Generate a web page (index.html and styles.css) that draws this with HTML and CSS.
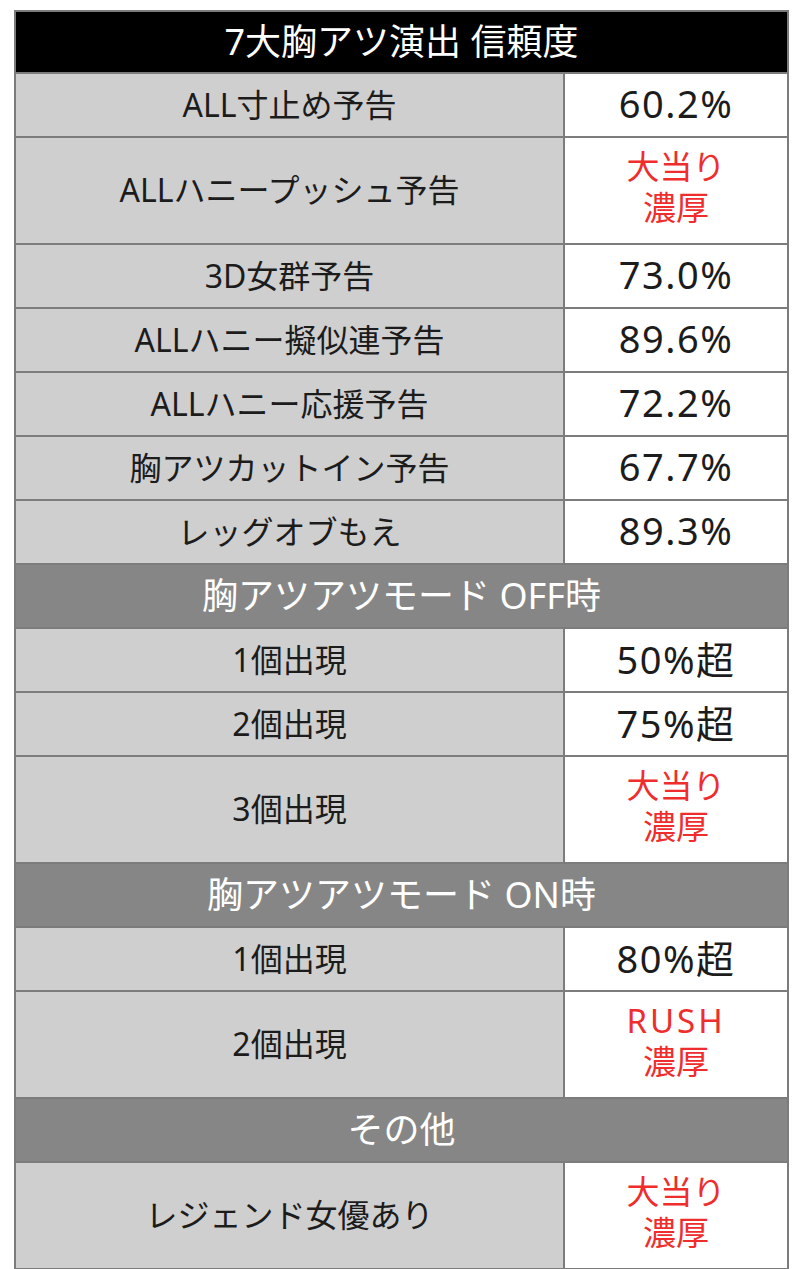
FILE: index.html
```html
<!DOCTYPE html>
<html lang="ja">
<head>
<meta charset="utf-8">
<title>7大胸アツ演出 信頼度</title>
<link rel="stylesheet" href="styles.css">
</head>
<body>
<div class="tbl">
  <div class="hd">7大胸アツ演出 信頼度</div>
  <div class="row"><div class="k">ALL寸止め予告</div><div class="v">60.2%</div></div>
  <div class="row tall"><div class="k">ALLハニープッシュ予告</div><div class="v red"><span class="t">大当り<br>濃厚</span></div></div>
  <div class="row"><div class="k">3D女群予告</div><div class="v">73.0%</div></div>
  <div class="row"><div class="k">ALLハニー擬似連予告</div><div class="v">89.6%</div></div>
  <div class="row"><div class="k">ALLハニー応援予告</div><div class="v">72.2%</div></div>
  <div class="row"><div class="k">胸アツカットイン予告</div><div class="v">67.7%</div></div>
  <div class="row"><div class="k">レッグオブもえ</div><div class="v">89.3%</div></div>
  <div class="sec">胸アツアツモード OFF時</div>
  <div class="row"><div class="k">1個出現</div><div class="v">50%超</div></div>
  <div class="row"><div class="k">2個出現</div><div class="v">75%超</div></div>
  <div class="row tall"><div class="k">3個出現</div><div class="v red"><span class="t">大当り<br>濃厚</span></div></div>
  <div class="sec">胸アツアツモード ON時</div>
  <div class="row"><div class="k">1個出現</div><div class="v">80%超</div></div>
  <div class="row tall"><div class="k">2個出現</div><div class="v red"><span class="t"><span class="lat">RUSH</span><br>濃厚</span></div></div>
  <div class="sec">その他</div>
  <div class="row tall"><div class="k">レジェンド女優あり</div><div class="v red"><span class="t">大当り<br>濃厚</span></div></div>
</div>
</body>
</html>
```
FILE: styles.css
```css
* { box-sizing: border-box; }
html, body { background: #ffffff; }
body {
  margin: 10px 0 0 14px;
  font-family: "Noto Sans", "Noto Sans CJK JP", sans-serif;
  color: #1c1c1c;
}
.tbl {
  width: 775px;
  border: 2px solid #7c7c7c;
  background: #ffffff;
}
.hd {
  height: 60px;
  padding-bottom: 5px;
  background: #000000;
  color: #ffffff;
  font-size: 36px;
  display: flex;
  align-items: center;
  justify-content: center;
}
.sec {
  height: 64px;
  padding-bottom: 5px;
  border-top: 2px solid #7c7c7c;
  background: #868686;
  color: #ffffff;
  font-size: 36px;
  display: flex;
  align-items: center;
  justify-content: center;
}
.row {
  display: flex;
  height: 64px;
  border-top: 2px solid #7c7c7c;
}
.row.tall { height: 107px; }
.k {
  width: 549px;
  padding-bottom: 5px;
  background: #cfcfcf;
  border-right: 2px solid #7c7c7c;
  font-size: 32px;
  display: flex;
  align-items: center;
  justify-content: center;
}
.v {
  flex: 1;
  padding-bottom: 5px;
  background: #ffffff;
  font-size: 38px;
  letter-spacing: 1.5px;
  display: flex;
  align-items: center;
  justify-content: center;
  text-align: center;
}
.v.red {
  color: #ef2d2d;
  font-size: 33px;
  line-height: 41px;
  letter-spacing: 0;
  padding-bottom: 7px;
}
.t { display: block; }
.lat { letter-spacing: 3px; }
```
